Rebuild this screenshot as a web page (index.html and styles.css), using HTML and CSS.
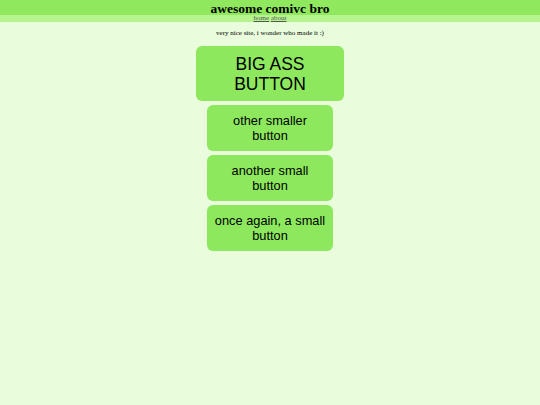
FILE: index.html
```html
<!DOCTYPE html>
<html>
<head>
<meta charset="utf-8">
<link rel="stylesheet" href="styles.css">
</head>
<body>
<header class="top">
  <h1 class="title">awesome comivc bro</h1>
</header>
<nav class="nav"><a href="#">home</a> <a href="#">about</a></nav>
<p class="intro">very nice site, i wonder who made it :)</p>
<main class="buttons">
  <button class="btn big">BIG ASS<br>BUTTON</button>
  <button class="btn small">other smaller<br>button</button>
  <button class="btn small">another small<br>button</button>
  <button class="btn small">once again, a small<br>button</button>
</main>
</body>
</html>
```
FILE: styles.css
```css
html, body {
  margin: 0;
  padding: 0;
}
body {
  background: #e9fddc;
  font-family: "Liberation Serif", serif;
  width: 540px;
  height: 405px;
}
.top {
  background: #8fe85d;
  height: 15px;
  display: flex;
  align-items: center;
  justify-content: center;
}
.title {
  margin: 0;
  padding-top: 1px;
  font-size: 13.5px;
  line-height: 15px;
  font-weight: bold;
  color: #000;
}
.nav {
  background: #b6f58e;
  height: 7px;
  font-size: 7px;
  line-height: 7px;
  text-align: center;
}
.nav a {
  color: #555;
}
.intro {
  margin: 0;
  padding-top: 7px;
  height: 17px;
  font-size: 7px;
  line-height: 8px;
  text-align: center;
  color: #000;
}
.buttons {
  display: flex;
  flex-direction: column;
  align-items: center;
  gap: 4px;
}
.btn {
  border: none;
  background: #8de85e;
  color: #000;
  font-family: "Liberation Sans", Arial, sans-serif;
  padding: 0;
  border-radius: 6px;
  text-align: center;
}
.big {
  width: 148px;
  height: 55px;
  font-size: 17.5px;
  line-height: 20px;
}
.small {
  width: 126px;
  height: 46px;
  font-size: 12.8px;
  line-height: 15px;
}
```
